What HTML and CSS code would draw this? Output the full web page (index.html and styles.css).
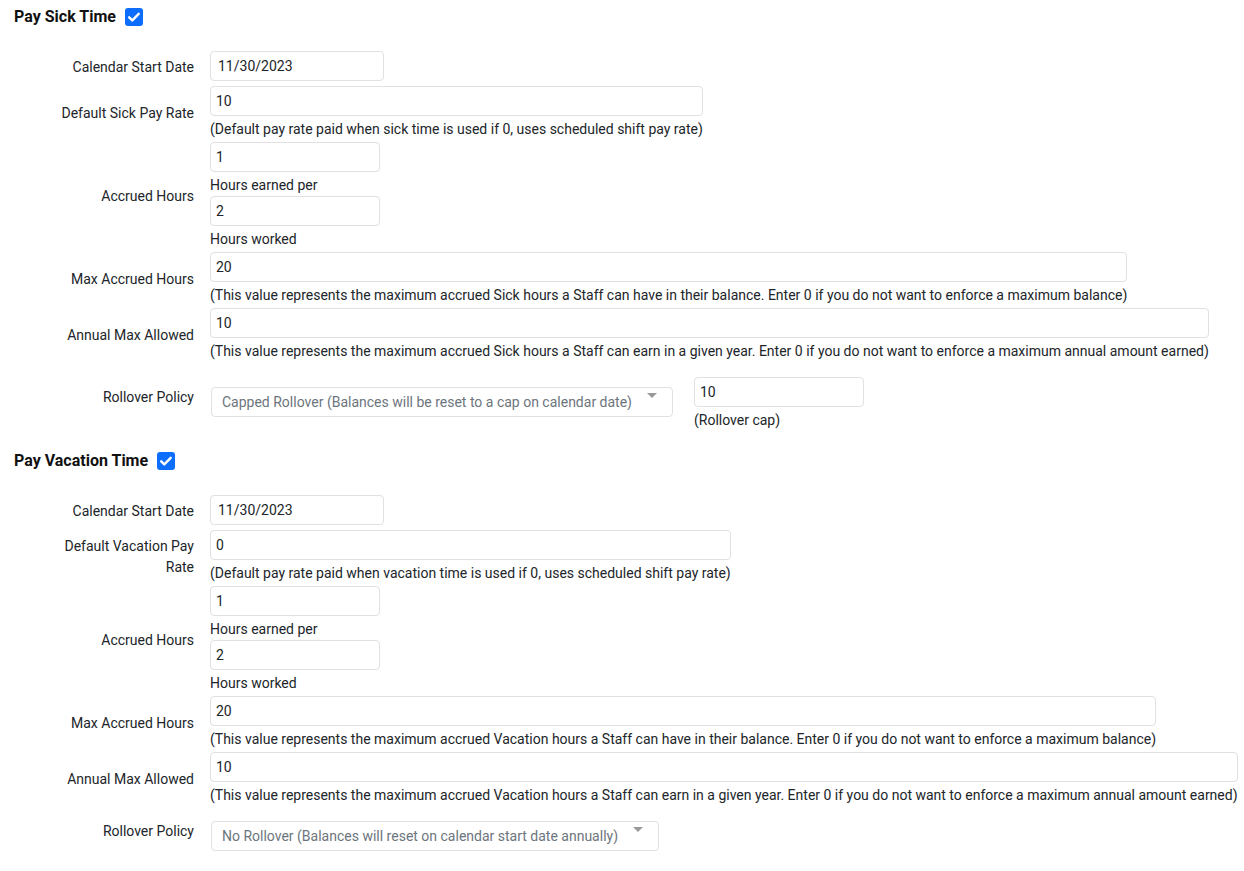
FILE: index.html
```html
<!DOCTYPE html>
<html lang="en">
<head>
<meta charset="utf-8">
<title>Time Off Settings</title>
<link rel="stylesheet" href="styles.css">
</head>
<body>
<div class="page">
  <section class="section">
    <div class="section-title">
      <span>Pay Sick Time</span>
      <span class="check"><svg viewBox="0 0 18 18" width="18" height="18"><path d="M4.2 9.3l3.1 3.1 6.4-6.6" fill="none" stroke="#fff" stroke-width="2.4" stroke-linecap="round" stroke-linejoin="round"/></svg></span>
    </div>
    <div class="row">
      <label class="label">Calendar Start Date</label>
      <div class="field"><input class="input date" type="text" value="11/30/2023"></div>
    </div>
    <div class="row">
      <label class="label">Default Sick Pay Rate</label>
      <div class="field"><input class="input" type="text" value="10"><span class="hint">(Default pay rate paid when sick time is used if 0, uses scheduled shift pay rate)</span></div>
    </div>
    <div class="row">
      <label class="label">Accrued Hours</label>
      <div class="field">
        <input class="input small" type="text" value="1"><span class="hint">Hours earned per</span>
        <input class="input small" type="text" value="2"><span class="hint">Hours worked</span>
      </div>
    </div>
    <div class="row">
      <label class="label">Max Accrued Hours</label>
      <div class="field"><input class="input" type="text" value="20"><span class="hint">(This value represents the maximum accrued Sick hours a Staff can have in their balance. Enter 0 if you do not want to enforce a maximum balance)</span></div>
    </div>
    <div class="row">
      <label class="label">Annual Max Allowed</label>
      <div class="field"><input class="input" type="text" value="10"><span class="hint">(This value represents the maximum accrued Sick hours a Staff can earn in a given year. Enter 0 if you do not want to enforce a maximum annual amount earned)</span></div>
    </div>
    <div class="row row-rollover">
      <label class="label">Rollover Policy</label>
      <div class="field field-select-low">
        <div class="select"><span>Capped Rollover (Balances will be reset to a cap on calendar date)</span><b class="arrow"></b></div>
      </div>
      <div class="field field-cap"><input class="input small" type="text" value="10"><span class="hint">(Rollover cap)</span></div>
    </div>
  </section>

  <section class="section">
    <div class="section-title">
      <span>Pay Vacation Time</span>
      <span class="check"><svg viewBox="0 0 18 18" width="18" height="18"><path d="M4.2 9.3l3.1 3.1 6.4-6.6" fill="none" stroke="#fff" stroke-width="2.4" stroke-linecap="round" stroke-linejoin="round"/></svg></span>
    </div>
    <div class="row">
      <label class="label">Calendar Start Date</label>
      <div class="field"><input class="input date" type="text" value="11/30/2023"></div>
    </div>
    <div class="row">
      <label class="label">Default Vacation Pay Rate</label>
      <div class="field"><input class="input" type="text" value="0"><span class="hint">(Default pay rate paid when vacation time is used if 0, uses scheduled shift pay rate)</span></div>
    </div>
    <div class="row">
      <label class="label">Accrued Hours</label>
      <div class="field">
        <input class="input small" type="text" value="1"><span class="hint">Hours earned per</span>
        <input class="input small" type="text" value="2"><span class="hint">Hours worked</span>
      </div>
    </div>
    <div class="row">
      <label class="label">Max Accrued Hours</label>
      <div class="field"><input class="input" type="text" value="20"><span class="hint">(This value represents the maximum accrued Vacation hours a Staff can have in their balance. Enter 0 if you do not want to enforce a maximum balance)</span></div>
    </div>
    <div class="row">
      <label class="label">Annual Max Allowed</label>
      <div class="field"><input class="input" type="text" value="10"><span class="hint">(This value represents the maximum accrued Vacation hours a Staff can earn in a given year. Enter 0 if you do not want to enforce a maximum annual amount earned)</span></div>
    </div>
    <div class="row row-rollover">
      <label class="label">Rollover Policy</label>
      <div class="field field-select">
        <div class="select"><span>No Rollover (Balances will reset on calendar start date annually)</span><b class="arrow"></b></div>
      </div>
    </div>
  </section>
</div>
</body>
</html>
```
FILE: styles.css
```css
* { box-sizing: border-box; }
html, body { margin: 0; padding: 0; background: #fff; }
body {
  font-family: Roboto, "Liberation Sans", Arial, sans-serif;
  font-size: 14px;
  color: #212529;
}
.page { padding: 7px 0 0 0; }
.section { margin-bottom: 20px; }
.section-title {
  display: flex;
  align-items: center;
  gap: 9px;
  margin-left: 14px;
  font-size: 16px;
  font-weight: 700;
  line-height: 20px;
  color: #111;
  margin-bottom: 24px;
}
.check {
  width: 18px;
  height: 18px;
  border-radius: 3px;
  background: #0d6efd;
  display: inline-flex;
}
.row {
  display: flex;
  align-items: center;
  margin-bottom: 2px;
}
.label {
  width: 140px;
  margin-left: 54px;
  margin-right: 16px;
  text-align: right;
  line-height: 21px;
  flex-shrink: 0;
}
.field {
  display: flex;
  flex-direction: column;
  align-items: stretch;
}
.input {
  display: block;
  width: 100%;
  height: 30px;
  margin: 0 0 3px 0;
  padding: 0 5px;
  border: 1px solid #e1e1e1;
  border-radius: 4px;
  font-family: inherit;
  font-size: 14px;
  color: #212529;
  background: #fff;
  outline: none;
}
.input.date { width: 174px; padding-left: 7px; }
.input.small { width: 170px; }
.hint {
  line-height: 21px;
  white-space: nowrap;
}
.field-select { margin-top: 13px; }
.field-select-low { margin-top: 23px; align-self: flex-start; }
.field-cap { margin-top: 13px; margin-left: 21px; align-self: flex-start; }
.select {
  position: relative;
  display: inline-flex;
  align-items: center;
  height: 30px;
  margin-left: 1px;
  margin-bottom: 4px;
  padding: 0 40px 0 10px;
  border: 1px solid #e1e1e1;
  border-radius: 4px;
  color: #6c757d;
  white-space: nowrap;
  background: #fff;
}
.arrow {
  position: absolute;
  right: 15px;
  top: 5px;
  width: 0;
  height: 0;
  border-left: 5px solid transparent;
  border-right: 5px solid transparent;
  border-top: 5px solid #999;
}
```
